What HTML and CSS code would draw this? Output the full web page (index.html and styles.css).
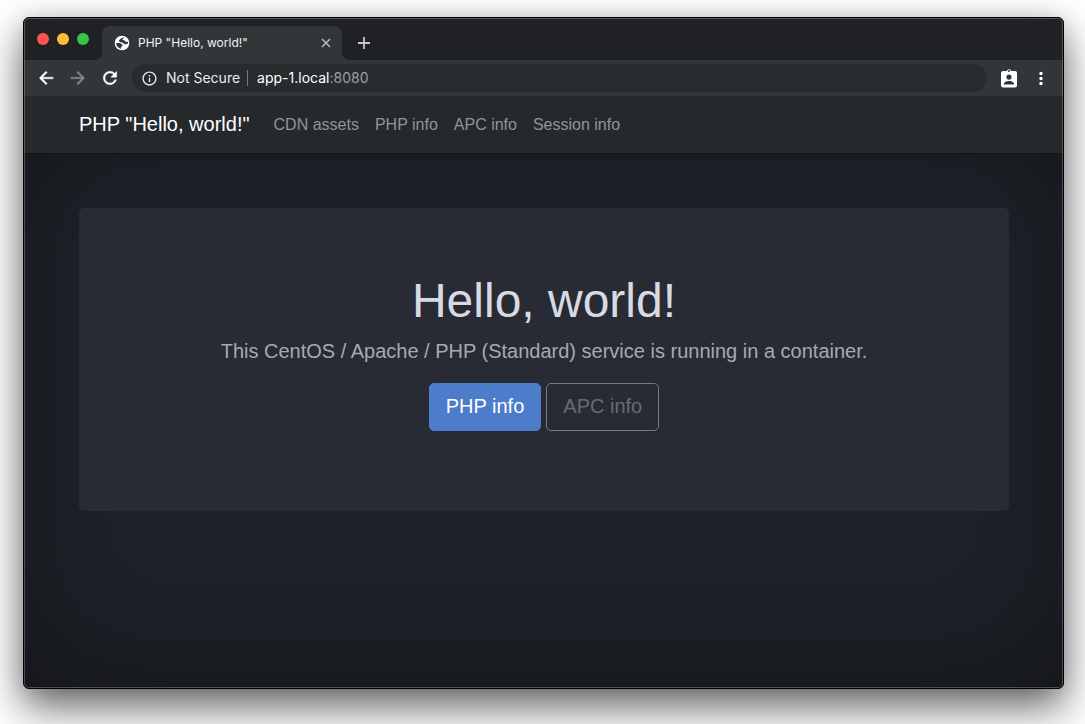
FILE: index.html
```html
<!DOCTYPE html>
<html lang="en">
<head>
<meta charset="utf-8">
<title>PHP "Hello, world!"</title>
<link rel="stylesheet" href="styles.css">
</head>
<body>
<div class="window">
  <header class="tabstrip">
    <div class="lights">
      <button class="light light-close" aria-label="Close window"></button>
      <button class="light light-min" aria-label="Minimize window"></button>
      <button class="light light-zoom" aria-label="Zoom window"></button>
    </div>
    <div class="tab">
      <svg class="favicon" viewBox="0 0 16 16" aria-hidden="true"><circle cx="8" cy="8" r="7.300" fill="#fff"/><path fill="#323639" d="M9.500 2.300L6.600 3.700 4.700 5.800l1.500 1.500 2.600.2 1 1.600 1.700.2 2.600-.9-.3-1.600-2.400-.1-1-1.500-1.900-.2.300-1.200 1.300-.8zM2.200 7.900l.3 2.300 1.300 1.900 2.900 1.800.2-1.700 1.900-1.700-1.100-1.500-2.600-1z"/></svg>
      <span class="tab-title">PHP "Hello, world!"</span>
      <button class="tab-close" aria-label="Close tab"><svg class="icon-small" viewBox="0 0 10 10"><path d="M1 1l8 8M9 1l-8 8" stroke="#bdc1c6" stroke-width="1.400"/></svg></button>
    </div>
    <button class="new-tab" aria-label="New tab"><svg class="icon-plus" viewBox="0 0 12 12"><path d="M6 0v12M0 6h12" stroke="#c4c7ca" stroke-width="1.800"/></svg></button>
  </header>
  <div class="toolbar">
    <button class="tool" aria-label="Back"><svg class="icon" viewBox="0 0 24 24"><path fill="#fff" stroke="#fff" stroke-width=".5" d="M20.500 11H7.830l5.590-5.590L12 4l-8 8 8 8 1.410-1.410L7.830 13H20.500v-2z"/></svg></button>
    <button class="tool" aria-label="Forward" disabled><svg class="icon" viewBox="0 0 24 24"><path fill="#85888a" stroke="#85888a" stroke-width=".5" d="M12 4l-1.410 1.410L16.170 11H3.500v2h12.670l-5.580 5.590L12 20l8-8z"/></svg></button>
    <button class="tool" aria-label="Reload"><svg class="icon" viewBox="0 0 24 24"><path fill="#fff" stroke="#fff" stroke-width=".5" d="M17.650 6.350C16.200 4.900 14.210 4 12 4c-4.420 0-7.990 3.580-7.990 8s3.570 8 7.990 8c3.730 0 6.840-2.550 7.730-6h-2.080c-.82 2.330-3.040 4-5.650 4-3.310 0-6-2.690-6-6s2.690-6 6-6c1.660 0 3.140.69 4.220 1.780L13 11h7V4l-2.350 2.350z"/></svg></button>
    <div class="omnibox">
      <svg class="icon-info" viewBox="0 0 24 24" aria-hidden="true"><path fill="#e8eaed" d="M11 7h2v2h-2zm0 4h2v6h-2zm1-9C6.480 2 2 6.480 2 12s4.480 10 10 10 10-4.480 10-10S17.520 2 12 2zm0 18c-4.410 0-8-3.590-8-8s3.590-8 8-8 8 3.590 8 8-3.590 8-8 8z"/></svg>
      <span class="security">Not Secure</span>
      <span class="url"><span class="host">app-1.local</span>:8080</span>
    </div>
    <button class="tool" aria-label="Profile"><svg class="icon" viewBox="0 0 20 20"><path fill="#fff" fill-rule="evenodd" d="M4 3h3.800a2.300 2.300 0 0 1 4.400 0H16a2 2 0 0 1 2 2v12.500a2 2 0 0 1-2 2H4a2 2 0 0 1-2-2V5a2 2 0 0 1 2-2zm6-1a1 1 0 1 0 0 2 1 1 0 0 0 0-2zm0 4.500a2.600 2.600 0 1 0 0 5.200 2.600 2.600 0 0 0 0-5.200zM5 16.500h10v-1c0-1.700-3.200-2.600-5-2.600s-5 .9-5 2.600z"/></svg></button>
    <button class="tool" aria-label="Menu"><svg class="icon" viewBox="0 0 20 20"><g fill="#fff"><circle cx="10" cy="5.500" r="1.700"/><circle cx="10" cy="10.500" r="1.700"/><circle cx="10" cy="15.500" r="1.700"/></g></svg></button>
  </div>
  <nav class="navbar">
    <a class="brand" href="#">PHP "Hello, world!"</a>
    <a class="nav-link" href="#">CDN assets</a>
    <a class="nav-link" href="#">PHP info</a>
    <a class="nav-link" href="#">APC info</a>
    <a class="nav-link" href="#">Session info</a>
  </nav>
  <main class="page">
    <section class="hero">
      <h1 class="hero-title">Hello, world!</h1>
      <p class="lead">This CentOS / Apache / PHP (Standard) service is running in a container.</p>
      <div class="actions">
        <a class="btn btn-primary" href="#">PHP info</a>
        <a class="btn btn-outline" href="#">APC info</a>
      </div>
    </section>
  </main>
</div>
</body>
</html>
```
FILE: styles.css
```css
* { box-sizing: border-box; }
body {
  margin: 0;
  min-height: 100vh;
  display: flex;
  padding: 17px 21px 35px 23px;
  background: #fdfefd;
  font-family: "Liberation Sans", Arial, sans-serif;
  overflow: hidden;
}
button { border: 0; padding: 0; background: none; }
a { text-decoration: none; }
svg { display: block; }
.window {
  flex: 1;
  display: flex;
  flex-direction: column;
  border: 1px solid #000;
  border-radius: 6px;
  box-shadow: 0 18px 40px rgba(0, 0, 0, 0.6), 0 0 20px rgba(0, 0, 0, 0.1);
  background: #1f2229;
  overflow: hidden;
  position: relative;
}
.window::after {
  content: "";
  position: absolute;
  inset: 0;
  border: 1px solid rgba(255, 255, 255, 0.24);
  border-radius: 5px;
  pointer-events: none;
}
.tabstrip {
  height: 42px;
  display: flex;
  align-items: flex-end;
  background: #202124;
}
.lights {
  display: flex;
  gap: 8px;
  padding: 0 13px 15px;
}
.light { width: 12px; height: 12px; border-radius: 50%; }
.light-close { background: #ff5350; }
.light-min { background: #ffbc3a; }
.light-zoom { background: #33c748; }
.tab {
  width: 240px;
  height: 34px;
  display: flex;
  align-items: center;
  gap: 8px;
  padding: 0 11px 0 12px;
  background: #323639;
  border-radius: 8px 8px 0 0;
  position: relative;
}
.tab::before, .tab::after {
  content: "";
  position: absolute;
  bottom: 0;
  width: 8px;
  height: 8px;
}
.tab::before { right: 100%; background: radial-gradient(circle at 0 0, #202124 8px, #323639 8px); }
.tab::after { left: 100%; background: radial-gradient(circle at 100% 0, #202124 8px, #323639 8px); }
.favicon { width: 16px; height: 16px; }
.tab-title {
  flex: 1;
  font: 12px/16px Inter, sans-serif;
  color: #f1f3f4;
}
.icon-small { width: 10px; height: 10px; }
.icon-plus { width: 12px; height: 12px; }
.new-tab { padding: 11px 16px; }
.toolbar {
  height: 36px;
  display: flex;
  align-items: center;
  gap: 12px;
  padding: 0 12px;
  background: #323639;
}
.icon { width: 20px; height: 20px; }
.omnibox {
  flex: 1;
  height: 28px;
  display: flex;
  align-items: center;
  gap: 8px;
  padding: 0 9px;
  border-radius: 14px;
  background: #282c2f;
  font: 14px/16px Inter, sans-serif;
  color: #9aa0a6;
}
.icon-info { width: 17px; height: 17px; }
.security {
  padding-right: 7px;
  border-right: 1px solid #777b7e;
  color: #e8eaed;
}
.url { padding-left: 1px; }
.host { color: #fff; }
.navbar {
  height: 58px;
  display: flex;
  align-items: center;
  gap: 16px;
  padding: 0 55px;
  background: #25292c;
  border-bottom: 1px solid #14171a;
}
.brand {
  margin-right: 8px;
  padding-bottom: 2px;
  font-size: 20px;
  line-height: 30px;
  color: #fff;
}
.nav-link { font-size: 16px; line-height: 24px; color: #929496; }
.page {
  flex: 1;
  padding: 54px;
  padding-left: 55px;
  box-shadow: inset 0 -20px 130px rgba(0, 0, 0, 0.36);
}
.hero {
  padding: 64px 32px 80px;
  border-radius: 5px;
  background: #282b34;
  text-align: center;
}
.hero-title {
  margin: 0 0 8px;
  font-size: 48px;
  line-height: 57px;
  font-weight: 400;
  color: #d7dae3;
}
.lead {
  margin: 0 0 18px;
  font-size: 20px;
  line-height: 28px;
  color: #a6a9b5;
}
.actions { display: flex; justify-content: center; gap: 5px; }
.btn {
  padding: 7px 16px 9px;
  border: 1px solid;
  border-radius: 5px;
  font-size: 20px;
  line-height: 30px;
}
.btn-primary { background: #4d7cca; border-color: #4d7cca; color: #fff; }
.btn-outline { border-color: #777a84; color: #666b75; }
```
